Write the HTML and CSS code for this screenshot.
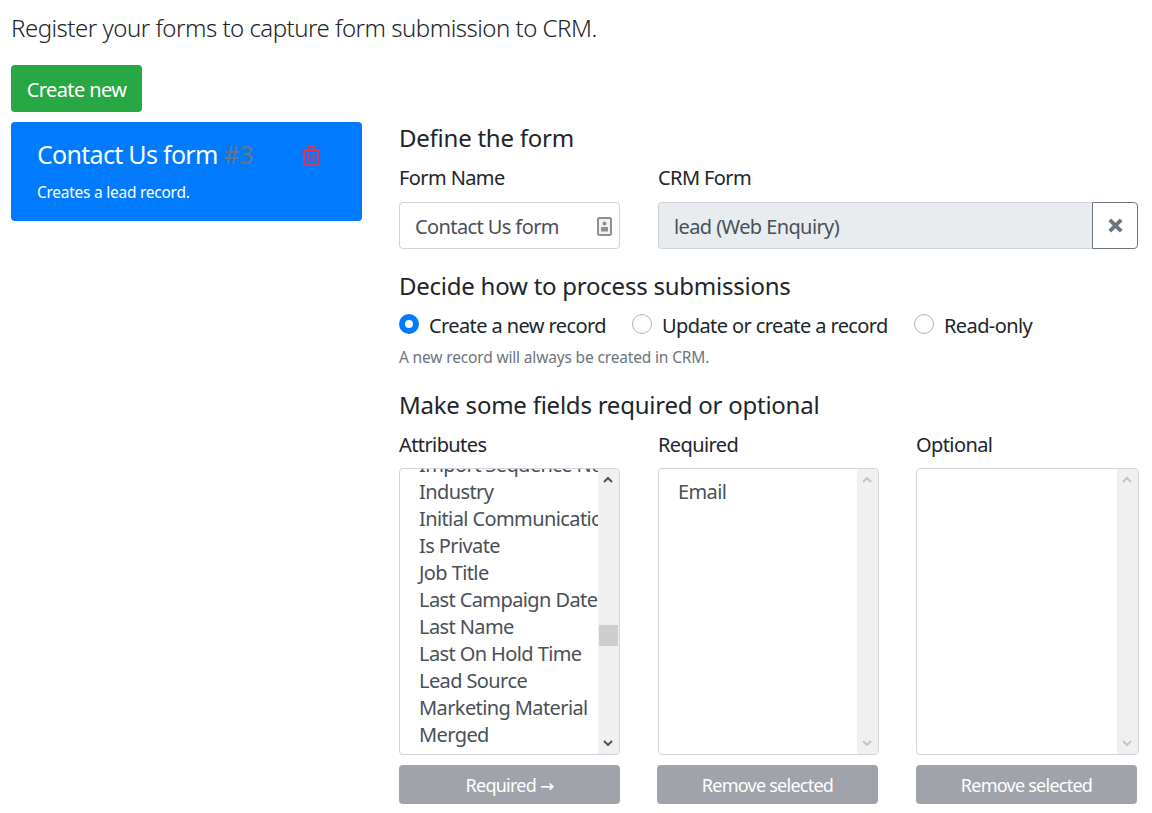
FILE: index.html
```html
<!DOCTYPE html>
<html lang="en">
<head>
    <meta charset="UTF-8">
    <title>Forms</title>
    <link rel="stylesheet" href="styles.css">
</head>
<body>
    <p class="lead">Register your forms to capture form submission to CRM.</p>
    <button class="btn-new">Create new</button>

    <div class="layout">
        <div class="form-card">
            <div class="card-head">
                <span class="card-title">Contact Us form <span class="card-num">#3</span></span>
                <svg class="trash" viewBox="0 0 18 21" width="18" height="21" fill="none" stroke="#dc3558" stroke-width="2">
                    <path d="M0 5h18M6 4V2q0-1 1-1h4q1 0 1 1v2M2 5v14q0 1 1 1h12q1 0 1-1V5M6.500 8.500v8M11.500 8.500v8"/>
                </svg>
            </div>
            <p class="card-text">Creates a lead record.</p>
        </div>

        <div class="editor">
            <h2>Define the form</h2>
            <div class="define-row">
                <div>
                    <label>Form Name</label>
                    <div class="input name-input">
                        <span>Contact Us form</span>
                        <svg viewBox="0 0 15 19" width="15" height="19">
                            <rect x="1" y="1" width="13" height="17" rx="1.500" fill="#f2f2f2" stroke="#8f8f8f" stroke-width="2"/>
                            <circle cx="7.500" cy="6.500" r="2" fill="#8f8f8f"/>
                            <path d="M4 10h7v4.500H4z" fill="#8f8f8f"/>
                        </svg>
                    </div>
                </div>
                <div>
                    <label>CRM Form</label>
                    <div class="crm-group">
                        <div class="input crm-input">lead (Web Enquiry)</div>
                        <button class="btn-clear">
                            <svg viewBox="0 0 15 15" width="15" height="15">
                                <path d="M1.800 1.800l11.400 11.400M13.200 1.800L1.800 13.200" stroke="#6c757d" stroke-width="3.800"/>
                            </svg>
                        </button>
                    </div>
                </div>
            </div>

            <h2 class="h-process">Decide how to process submissions</h2>
            <div class="radios">
                <span class="radio radio-on"></span><span class="radio-label label-create">Create a new record</span>
                <span class="radio"></span><span class="radio-label label-update">Update or create a record</span>
                <span class="radio"></span><span class="radio-label">Read-only</span>
            </div>
            <p class="help">A new record will always be created in CRM.</p>

            <h2 class="h-fields">Make some fields required or optional</h2>
            <div class="lists">
                <div>
                    <label>Attributes</label>
                    <div class="listbox">
                        <ul class="options scrolled">
                            <li>Import Sequence Number</li>
                            <li>Industry</li>
                            <li>Initial Communication</li>
                            <li>Is Private</li>
                            <li>Job Title</li>
                            <li>Last Campaign Date</li>
                            <li>Last Name</li>
                            <li>Last On Hold Time</li>
                            <li>Lead Source</li>
                            <li>Marketing Material</li>
                            <li>Merged</li>
                        </ul>
                        <div class="scrollbar">
                            <svg viewBox="0 0 10 6" width="10" height="6"><path d="M1 5l4-4 4 4" fill="none" stroke="#505050" stroke-width="2"/></svg>
                            <div class="thumb"></div>
                            <svg viewBox="0 0 10 6" width="10" height="6"><path d="M1 1l4 4 4-4" fill="none" stroke="#505050" stroke-width="2"/></svg>
                        </div>
                    </div>
                    <button class="btn-move">Required <span class="arrow">→</span></button>
                </div>
                <div>
                    <label>Required</label>
                    <div class="listbox">
                        <ul class="options">
                            <li>Email</li>
                        </ul>
                        <div class="scrollbar">
                            <svg viewBox="0 0 10 6" width="10" height="6"><path d="M1 5l4-4 4 4" fill="none" stroke="#c4c4c4" stroke-width="2"/></svg>
                            <svg viewBox="0 0 10 6" width="10" height="6"><path d="M1 1l4 4 4-4" fill="none" stroke="#c4c4c4" stroke-width="2"/></svg>
                        </div>
                    </div>
                    <button class="btn-move btn-shift">Remove selected</button>
                </div>
                <div class="list-last">
                    <label>Optional</label>
                    <div class="listbox">
                        <ul class="options"></ul>
                        <div class="scrollbar">
                            <svg viewBox="0 0 10 6" width="10" height="6"><path d="M1 5l4-4 4 4" fill="none" stroke="#c4c4c4" stroke-width="2"/></svg>
                            <svg viewBox="0 0 10 6" width="10" height="6"><path d="M1 1l4 4 4-4" fill="none" stroke="#c4c4c4" stroke-width="2"/></svg>
                        </div>
                    </div>
                    <button class="btn-move">Remove selected</button>
                </div>
            </div>
        </div>
    </div>
</body>
</html>
```

FILE: styles.css
```css
* {
    box-sizing: border-box;
}
body {
    margin: 0;
    padding: 11px 14px 0 11px;
    font-family: "Noto Sans", "Open Sans", sans-serif;
    font-size: 20px;
    line-height: 27px;
    color: #212529;
    background-color: #fff;
    letter-spacing: -0.6px;
}
button {
    font-family: inherit;
    letter-spacing: inherit;
}
.lead {
    margin: 0 0 20px;
    height: 34px;
    font-size: 24px;
    line-height: 34px;
    font-weight: 300;
    letter-spacing: -0.5px;
}
.btn-new {
    display: block;
    width: 131px;
    height: 47px;
    padding: 2px 0 0;
    border: none;
    border-radius: 4px;
    background-color: #28a745;
    color: #fff;
    font-size: 20px;
}
.layout {
    display: flex;
    gap: 37px;
    margin-top: 10px;
}
.form-card {
    flex: none;
    width: 351px;
    height: 99px;
    padding: 15px 26px;
    border-radius: 4px;
    background-color: #007bff;
    color: #fff;
}
.card-head {
    display: flex;
    align-items: center;
    justify-content: space-between;
    padding-right: 16px;
    height: 34px;
}
.card-title {
    font-size: 25px;
    line-height: 34px;
    letter-spacing: -0.7px;
}
.card-num {
    color: #6c757d;
}
.trash {
    margin-top: 3px;
}
.card-text {
    margin: 10px 0 0;
    font-size: 15.500px;
    line-height: 22px;
    letter-spacing: -0.26px;
}
.editor {
    flex: 1;
    min-width: 0;
}
h2 {
    margin: 0;
    font-size: 24px;
    line-height: 32px;
    font-weight: 400;
    letter-spacing: -0.24px;
}
label {
    display: block;
    height: 27px;
}
.define-row {
    display: grid;
    grid-template-columns: 221px 480px;
    gap: 38px;
    margin-top: 10px;
}
.input {
    display: flex;
    align-items: center;
    justify-content: space-between;
    height: 47px;
    padding: 2px 7px 0 15px;
    border: 1px solid #ced4da;
    border-radius: 4px;
    color: #495057;
}
.define-row label {
    margin-bottom: 11px;
}
.crm-group {
    display: flex;
}
.crm-input {
    flex: 1;
    background-color: #e9ecef;
    border-radius: 4px 0 0 4px;
    border-right: none;
}
.btn-clear {
    display: flex;
    align-items: center;
    justify-content: center;
    width: 46px;
    height: 47px;
    padding: 0;
    border: 1px solid #6c757d;
    border-radius: 0 4px 4px 0;
    background-color: #fff;
}
.h-process {
    margin-top: 21px;
}
.radios {
    display: flex;
    align-items: center;
    height: 27px;
    margin-top: 10px;
}
.radio {
    flex: none;
    width: 20px;
    height: 20px;
    margin: 0 10px 4px 0;
    border: 1px solid #adb5bd;
    border-radius: 50%;
    background-color: #fff;
}
.radio-on {
    border: 6px solid #007bff;
}
.label-create {
    width: 203px;
}
.label-update {
    width: 252px;
}
.help {
    margin: 7px 0 0;
    font-size: 15.500px;
    line-height: 22px;
    letter-spacing: -0.16px;
    color: #6c757d;
}
.h-fields {
    margin-top: 21px;
}
.lists {
    display: grid;
    grid-template-columns: 221px 221px 222px;
    gap: 38px;
    margin-top: 10px;
}
.list-last {
    margin-left: -1px;
}
.lists label {
    margin-bottom: 10px;
}
.listbox {
    display: flex;
    height: 287px;
    border: 1px solid #ced4da;
    border-radius: 4px;
    overflow: hidden;
}
.options {
    flex: 1;
    min-width: 0;
    margin: 0;
    padding: 9px 0 0 19px;
    list-style: none;
    color: #495057;
    white-space: nowrap;
    overflow: hidden;
}
.options li {
    height: 27px;
}
.scrolled {
    padding-top: 0;
}
.scrolled li:first-child {
    margin-top: -18px;
}
.scrollbar {
    flex: none;
    display: flex;
    flex-direction: column;
    align-items: center;
    justify-content: space-between;
    width: 21px;
    padding: 8px 1px 8px 0;
    background-color: #f0f0f0;
}
.thumb {
    width: 19px;
    height: 21px;
    margin-top: 142px;
    margin-bottom: auto;
    background-color: #cdcdcd;
}
.btn-move {
    display: block;
    width: 221px;
    height: 39px;
    margin-top: 10px;
    padding: 0;
    border: none;
    border-radius: 4px;
    background-color: #a0a4aa;
    color: #fff;
    font-size: 18px;
    letter-spacing: -0.75px;
}
.btn-shift {
    margin-left: -1px;
}
.arrow {
    font-family: "DejaVu Sans", sans-serif;
    font-size: 17px;
}
```
